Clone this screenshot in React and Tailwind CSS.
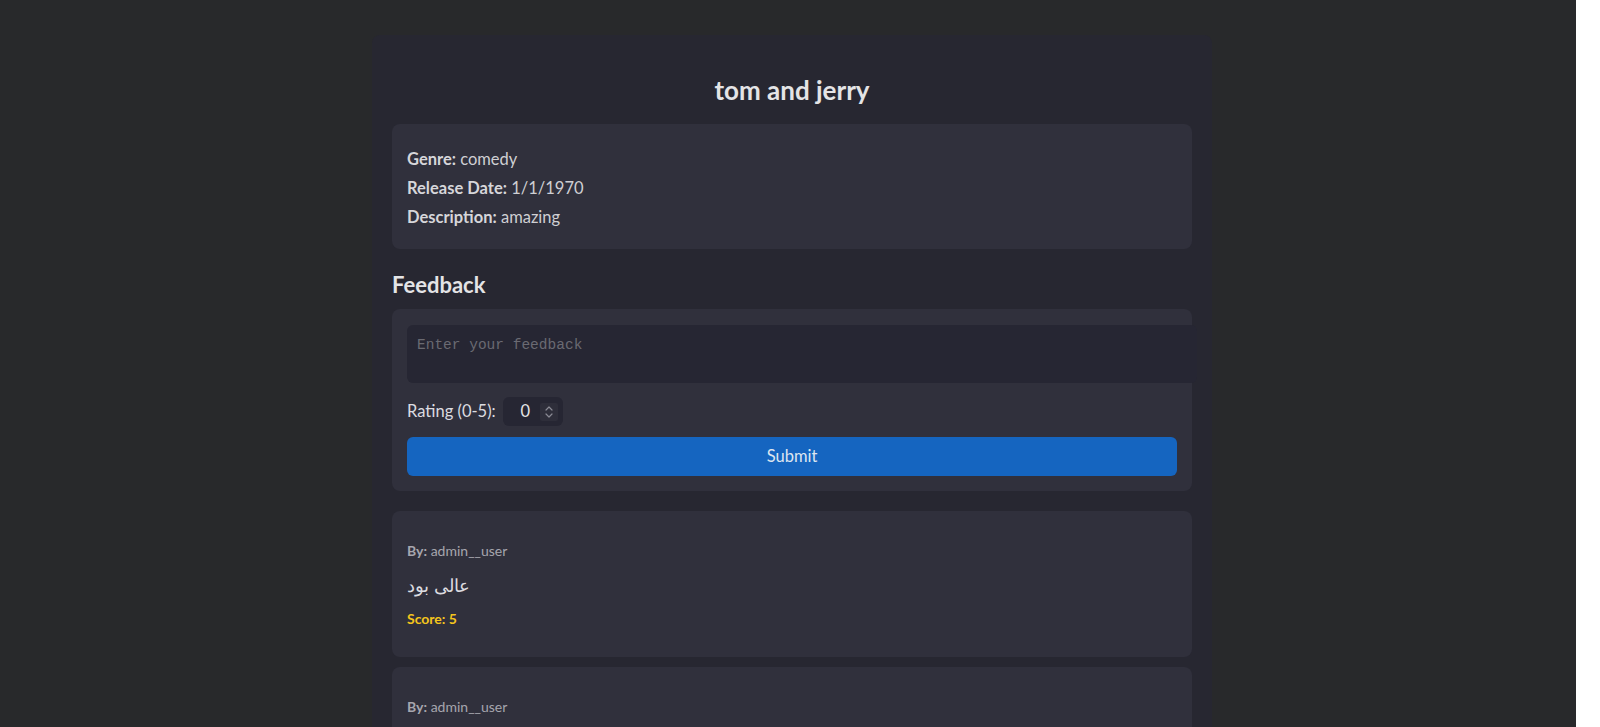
import React, { useState } from 'react';

const FEEDBACKS = [
  { id: 1, user: 'admin__user', text: 'عالی بود', score: 5 },
  { id: 2, user: 'admin__user', text: 'خوب بود', score: 4 },
];

export default function App() {
  const [feedback, setFeedback] = useState('');
  const [rating, setRating] = useState(0);

  return (
    <div className="flex h-[727px] w-[1600px] overflow-hidden font-['Lato','Noto_Sans',sans-serif]">
      <div className="flex flex-1 justify-center bg-[#28292b] pl-[8px]">
        <div className="mt-[35px] w-[840px] self-start rounded-[8px] bg-[#272731] px-[20px] pt-[20px] pb-[20px]">
          <h2 className="mt-[20px] mb-[19px] text-center text-[26px] leading-[30px] font-bold text-[#e4e4e6]">tom and jerry</h2>

          {/* Movie info */}
          <div className="rounded-[8px] bg-[#30303c] px-[15px] pt-[21px] pb-[17px] text-[16.5px] leading-[29px] text-[#cfcfd3]">
            <p><span className="font-bold text-[#d6d6da]">Genre:</span> comedy</p>
            <p><span className="font-bold text-[#d6d6da]">Release Date:</span> 1/1/1970</p>
            <p><span className="font-bold text-[#d6d6da]">Description:</span> amazing</p>
          </div>

          <h3 className="mt-[24px] mb-[12px] text-[22px] leading-[24px] font-bold text-[#e4e4e6]">Feedback</h3>

          {/* Feedback form */}
          <div className="rounded-[8px] bg-[#30303c] px-[15px] pt-[16px] pb-[15px]">
            <textarea
              value={feedback}
              onChange={e => setFeedback(e.target.value)}
              placeholder="Enter your feedback"
              className="block h-[58px] w-[790px] resize-none rounded-[6px] bg-[#262633] px-[10px] py-[10px] font-['Liberation_Mono',monospace] text-[14.5px] leading-[20px] text-[#d0d0d4] placeholder:text-[#6a6a72] focus:outline-none"
            />
            <div className="mt-[14px] flex items-center gap-[7px]">
              <label className="text-[16.5px] text-[#dcdce0]">Rating (0-5):</label>
              <div className="flex h-[29px] w-[60px] items-center rounded-[6px] bg-[#262633] pr-[5px]">
                <input
                  type="number"
                  min={0}
                  max={5}
                  value={rating}
                  onChange={e => setRating(e.target.value)}
                  className="w-[37px] bg-transparent pl-[8px] text-center text-[16.5px] text-[#e4e4e6] [appearance:textfield] focus:outline-none [&::-webkit-inner-spin-button]:appearance-none"
                />
                <div className="ml-auto flex h-[18px] w-[18px] items-center justify-center rounded-[2px] bg-[#2e2e3a]">
                  <svg width="10" height="14" viewBox="0 0 10 14" fill="none" stroke="#8a8a94" strokeWidth="1.2" strokeLinecap="round" strokeLinejoin="round">
                    <path d="M2 5 L5 2 L8 5" />
                    <path d="M2 9 L5 12 L8 9" />
                  </svg>
                </div>
              </div>
            </div>
            <button className="mt-[11px] block h-[39px] w-full rounded-[6px] bg-[#1565c0] text-[16.5px] text-[#dde6f0]">Submit</button>
          </div>

          {/* Feedback list */}
          <div className="mt-[20px] flex flex-col gap-[10px]">
            {FEEDBACKS.map(f => (
              <div key={f.id} className="rounded-[8px] bg-[#30303c] px-[15px] pt-[31px] pb-[29px]">
                <p className="h-[18px] text-[14px] leading-[18px] text-[#a6a6ae]"><span className="font-bold">By:</span> {f.user}</p>
                <p dir="rtl" className="mt-[13px] h-[24px] text-[18px] leading-[24px] text-[#dcdce0]" style={{ textAlign: 'left' }}>{f.text}</p>
                <p className="mt-[13px] h-[18px] text-[14px] leading-[18px] font-bold text-[#f4c51c]">Score: {f.score}</p>
              </div>
            ))}
          </div>
        </div>
      </div>
      <div className="w-[24px] bg-white" />
    </div>
  );
}
